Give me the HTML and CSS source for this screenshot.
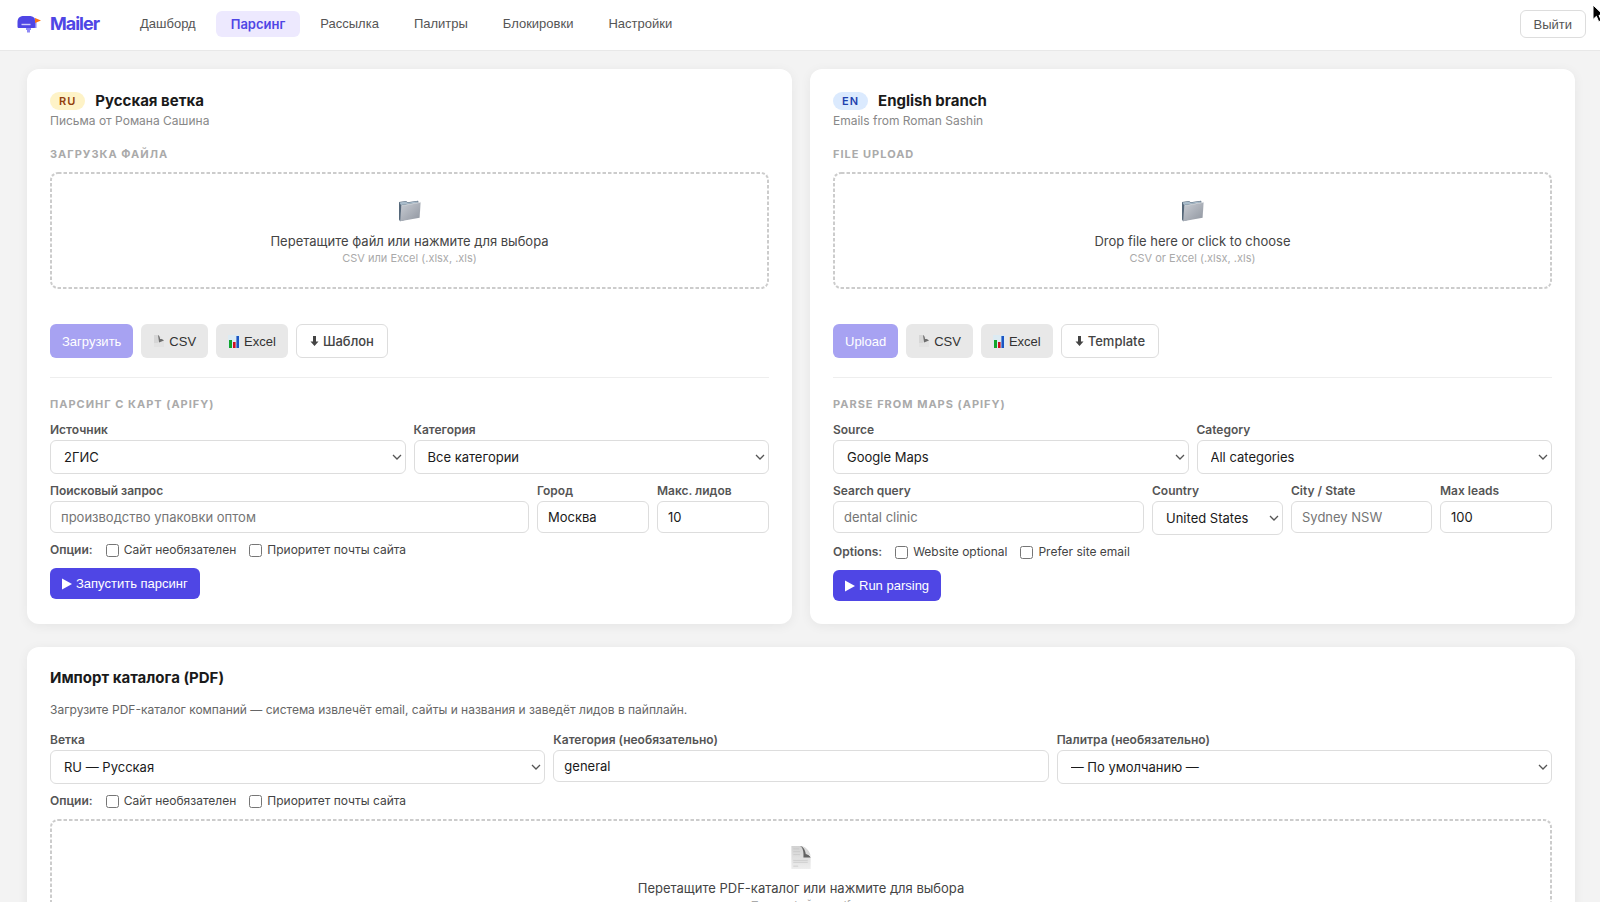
FILE: index.html
```html
<!DOCTYPE html>
<html lang="ru">
<head>
	<meta charset="utf-8">
	<title>Mailer</title>
	<link rel="stylesheet" href="styles.css">
</head>
<body>
	<!-- shared icons -->
	<svg class="sprite" width="0" height="0">
		<defs>
			<linearGradient id="folderFront" x1="0" y1="0" x2="1" y2="1">
				<stop offset="0" stop-color="#c9cdd4"/>
				<stop offset="1" stop-color="#8f959f"/>
			</linearGradient>
			<linearGradient id="paper" x1="0" y1="0" x2="0" y2="1">
				<stop offset="0" stop-color="#d2d2d2"/>
				<stop offset="1" stop-color="#eeeeee"/>
			</linearGradient>
		</defs>
		<symbol id="icon-folder" viewBox="0 0 24 24">
			<path d="M1 3.5 8 2.6l1.6 1.2L20 2.2l.6 1.6L20 18 2 22.8 1 21z" fill="#56687a"/>
			<path d="M1.4 3.9 7.8 3l1.8 1.3 10-1.6v1.4L3 6.6z" fill="#a9bccb"/>
			<path d="M3.3 7.2 22.6 3.8 21.6 19.2 2.2 22.8z" fill="url(#folderFront)"/>
			<path d="M3.3 7.2 22.6 3.8" stroke="#e2e6ea" stroke-width=".7"/>
		</symbol>
		<symbol id="icon-page" viewBox="0 0 24 28">
			<path d="M2 2h11.5L22 14v12H2z" fill="url(#paper)"/>
			<path d="M11 2c3 1.500 4 6 3.500 12H22c-.5-1.500-2-2.800-3.500-3.200C17.500 7 15 3 11 2z" fill="#636363"/>
			<path d="M13 2c5 1.500 8.500 6 9 10.500-1.500-1.500-3-2-5-2C16.500 7 15 3.500 13 2z" fill="#d9d9d9"/>
			<path d="M4 5h6M4 8h7M4 11h7M4 17h15M4 19h15M4 23h5" stroke="#c4c4c4" stroke-width=".7"/>
		</symbol>
		<symbol id="icon-csv" viewBox="0 0 12 14">
			<path d="M1 1h5l5 6v6H1z" fill="#e2e2e2"/>
			<path d="M1 1h4v8H1z" fill="#d6d6d6"/>
			<path d="M5 1c1.500 1 2 2.500 2 4 1.500-.2 3.500.5 4 1.500L6 8.500z" fill="#6d6d6d"/>
		</symbol>
		<symbol id="icon-chart" viewBox="0 0 12 13">
			<path d="M0 0h12v13H0z" fill="#dcebf3"/>
			<path d="M1 5h3v8H1z" fill="#14a52c"/>
			<path d="M5 7h2.600v6H5z" fill="#cf1020"/>
			<path d="M8.400 1H11v12H8.400z" fill="#1b55c4"/>
		</symbol>
		<symbol id="icon-down" viewBox="0 0 9 12">
			<path d="M3 1h3v5.500h2.500l-4 4.500-4-4.500H3z" fill="currentColor"/>
		</symbol>
		<symbol id="icon-play" viewBox="0 0 10 12">
			<path d="M0 .5 10 6 0 11.500z" fill="currentColor"/>
		</symbol>
	</svg>

	<header class="topbar">
		<a class="logo" href="#">
			<svg width="24" height="18" viewBox="0 0 24 18">
				<path d="M12 1.500c5 0 7.500 2 7.500 5.500v6H12z" fill="#8a84f5"/>
				<path d="M9 12h5v3h-1v2.500h-3V15H9z" fill="#8f89f6"/>
				<path d="M.5 7C.5 2.500 3.500 1 7 1h5c4 0 6 2 6 6v4.500c0 1-.5 1.500-1.500 1.500H2C1 13 .5 12.500.5 11.500z" fill="#4f46e5"/>
				<path d="M4.500 9.500h9" stroke="#cfccfb" stroke-width="1.400"/>
				<path d="M18 3l6 2.600-6 2.400z" fill="#f97316"/>
			</svg>
			<span>Mailer</span>
		</a>
		<nav class="nav">
			<a class="nav-link" href="#">Дашборд</a>
			<a class="nav-link active" href="#">Парсинг</a>
			<a class="nav-link" href="#">Рассылка</a>
			<a class="nav-link" href="#">Палитры</a>
			<a class="nav-link" href="#">Блокировки</a>
			<a class="nav-link" href="#">Настройки</a>
		</nav>
		<button class="logout" type="button">Выйти</button>
	</header>

	<main class="page">
		<div class="branches">
			<section class="card">
				<div class="card-head">
					<span class="badge badge-ru">RU</span>
					<h2>Русская ветка</h2>
				</div>
				<p class="subtitle">Письма от Романа Сашина</p>

				<h3 class="section-title">Загрузка файла</h3>
				<div class="dropzone">
					<svg class="drop-icon" width="24" height="24"><use href="#icon-folder"/></svg>
					<p class="drop-text">Перетащите файл или нажмите для выбора</p>
					<p class="drop-hint">CSV или Excel (.xlsx, .xls)</p>
				</div>
				<div class="actions">
					<button class="btn btn-primary" type="button" disabled>Загрузить</button>
					<button class="btn btn-gray" type="button"><svg width="12" height="14"><use href="#icon-csv"/></svg>CSV</button>
					<button class="btn btn-gray" type="button"><svg width="12" height="13"><use href="#icon-chart"/></svg>Excel</button>
					<a class="btn btn-outline" href="#"><svg width="9" height="12"><use href="#icon-down"/></svg>Шаблон</a>
				</div>

				<hr class="divider">

				<h3 class="section-title">Парсинг с карт (Apify)</h3>
				<form class="form">
					<div class="row row-2">
						<div class="field">
							<label for="ru-source">Источник</label>
							<select id="ru-source"><option>2ГИС</option></select>
						</div>
						<div class="field">
							<label for="ru-category">Категория</label>
							<select id="ru-category"><option>Все категории</option></select>
						</div>
					</div>
					<div class="row row-ru">
						<div class="field">
							<label for="ru-query">Поисковый запрос</label>
							<input id="ru-query" type="text" placeholder="производство упаковки оптом">
						</div>
						<div class="field">
							<label for="ru-city">Город</label>
							<input id="ru-city" type="text" value="Москва">
						</div>
						<div class="field">
							<label for="ru-max">Макс. лидов</label>
							<input id="ru-max" type="number" value="10">
						</div>
					</div>
					<div class="options">
						<span class="options-title">Опции:</span>
						<label class="check"><input type="checkbox">Сайт необязателен</label>
						<label class="check"><input type="checkbox">Приоритет почты сайта</label>
					</div>
					<button class="btn btn-primary btn-run" type="button"><svg width="10" height="12"><use href="#icon-play"/></svg>Запустить парсинг</button>
				</form>
			</section>

			<section class="card" lang="en">
				<div class="card-head">
					<span class="badge badge-en">EN</span>
					<h2>English branch</h2>
				</div>
				<p class="subtitle">Emails from Roman Sashin</p>

				<h3 class="section-title">File upload</h3>
				<div class="dropzone">
					<svg class="drop-icon" width="24" height="24"><use href="#icon-folder"/></svg>
					<p class="drop-text">Drop file here or click to choose</p>
					<p class="drop-hint">CSV or Excel (.xlsx, .xls)</p>
				</div>
				<div class="actions">
					<button class="btn btn-primary" type="button" disabled>Upload</button>
					<button class="btn btn-gray" type="button"><svg width="12" height="14"><use href="#icon-csv"/></svg>CSV</button>
					<button class="btn btn-gray" type="button"><svg width="12" height="13"><use href="#icon-chart"/></svg>Excel</button>
					<a class="btn btn-outline" href="#"><svg width="9" height="12"><use href="#icon-down"/></svg>Template</a>
				</div>

				<hr class="divider">

				<h3 class="section-title">Parse from maps (Apify)</h3>
				<form class="form">
					<div class="row row-2">
						<div class="field">
							<label for="en-source">Source</label>
							<select id="en-source"><option>Google Maps</option></select>
						</div>
						<div class="field">
							<label for="en-category">Category</label>
							<select id="en-category"><option>All categories</option></select>
						</div>
					</div>
					<div class="row row-en">
						<div class="field">
							<label for="en-query">Search query</label>
							<input id="en-query" type="text" placeholder="dental clinic">
						</div>
						<div class="field">
							<label for="en-country">Country</label>
							<select id="en-country"><option>United States</option></select>
						</div>
						<div class="field">
							<label for="en-city">City / State</label>
							<input id="en-city" type="text" placeholder="Sydney NSW">
						</div>
						<div class="field">
							<label for="en-max">Max leads</label>
							<input id="en-max" type="number" value="100">
						</div>
					</div>
					<div class="options">
						<span class="options-title">Options:</span>
						<label class="check"><input type="checkbox">Website optional</label>
						<label class="check"><input type="checkbox">Prefer site email</label>
					</div>
					<button class="btn btn-primary btn-run" type="button"><svg width="10" height="12"><use href="#icon-play"/></svg>Run parsing</button>
				</form>
			</section>
		</div>

		<section class="card">
			<h2 class="import-title">Импорт каталога (PDF)</h2>
			<p class="import-text">Загрузите PDF-каталог компаний — система извлечёт email, сайты и названия и заведёт лидов в пайплайн.</p>
			<form class="form">
				<div class="row row-3">
					<div class="field">
						<label for="pdf-branch">Ветка</label>
						<select id="pdf-branch"><option>RU — Русская</option></select>
					</div>
					<div class="field">
						<label for="pdf-category">Категория (необязательно)</label>
						<input id="pdf-category" type="text" value="general">
					</div>
					<div class="field">
						<label for="pdf-palette">Палитра (необязательно)</label>
						<select id="pdf-palette"><option>— По умолчанию —</option></select>
					</div>
				</div>
				<div class="options">
					<span class="options-title">Опции:</span>
					<label class="check"><input type="checkbox">Сайт необязателен</label>
					<label class="check"><input type="checkbox">Приоритет почты сайта</label>
				</div>
				<div class="dropzone">
					<svg class="drop-icon" width="24" height="28"><use href="#icon-page"/></svg>
					<p class="drop-text">Перетащите PDF-каталог или нажмите для выбора</p>
					<p class="drop-hint">Только файлы .pdf</p>
				</div>
			</form>
		</section>
	</main>

	<svg class="cursor" width="14" height="20" viewBox="0 0 14 20">
		<path d="M1 1v14.500l3.400-3.200 2.300 5.400 2.600-1.100L7 11.300h4.800z" fill="#000" stroke="#fff" stroke-width="1"/>
	</svg>
</body>
</html>
```
FILE: styles.css
```css
* {
	box-sizing: border-box;
	margin: 0;
	padding: 0;
}

body {
	background: #f3f3f3;
	color: #1a1a1a;
	font-family: Inter, "Open Sans", sans-serif;
	font-size: 13px;
	line-height: 16px;
	overflow-x: hidden;
}

a {
	color: inherit;
	text-decoration: none;
}

.sprite {
	display: block;
}

/* top bar */
.topbar {
	display: flex;
	align-items: center;
	height: 51px;
	padding: 0 14px 2px 17px;
	background: #fff;
	border-bottom: 1px solid #e8e8e8;
}

.logo {
	display: flex;
	align-items: center;
	gap: 9px;
	margin-right: 26px;
	color: #4f46e5;
	font-size: 18px;
	font-weight: 700;
	letter-spacing: -1px;
}

.nav {
	display: flex;
	align-items: center;
	gap: 5px;
}

.nav-link {
	padding: 5px 15px;
	border-radius: 6px;
	color: #555;
	font-family: "Liberation Sans", Arial, sans-serif;
	font-size: 13px;
}

.nav-link.active {
	background: #ede9fe;
	color: #4f46e5;
	font-family: Inter, sans-serif;
	font-weight: 600;
}

.logout {
	height: 28px;
	margin-left: auto;
	padding: 0 13px;
	background: #fff;
	border: 1px solid #ddd;
	border-radius: 6px;
	color: #555;
	font-family: "Liberation Sans", Arial, sans-serif;
	font-size: 13px;
}

/* layout */
.page {
	display: flex;
	flex-direction: column;
	gap: 23px;
	padding: 18px 25px 24px 27px;
}

.branches {
	display: grid;
	grid-template-columns: 1fr 1fr;
	gap: 18px;
}

.card {
	padding: 23px;
	background: #fff;
	border-radius: 12px;
	box-shadow: 0 2px 12px rgba(0, 0, 0, 0.06);
}

.card-head {
	display: flex;
	align-items: center;
	gap: 10px;
	height: 18px;
}

h2 {
	font-size: 15px;
	font-weight: 700;
}

.badge {
	padding: 1px 9px;
	border-radius: 10px;
	font-size: 11px;
	font-weight: 600;
	letter-spacing: 1px;
}

.badge-ru {
	background: #fef3c7;
	color: #92400e;
}

.badge-en {
	background: #dbeafe;
	color: #1e40af;
}

.subtitle {
	margin: 3px 0 17px;
	color: #888;
	font-size: 12px;
}

.section-title {
	margin-bottom: 10px;
	color: #aaa;
	font-size: 11px;
	font-weight: 700;
	letter-spacing: 1px;
	text-transform: uppercase;
}

/* file drop, short dashes drawn as a background */
.dropzone {
	display: flex;
	flex-direction: column;
	align-items: center;
	height: 117px;
	padding-top: 25px;
	border-radius: 8px;
	background: url("data:image/svg+xml,%3Csvg xmlns='http://www.w3.org/2000/svg' width='100%25' height='100%25'%3E%3Crect width='100%25' height='100%25' rx='8' fill='none' stroke='%23ccc' stroke-width='4' stroke-dasharray='3.5 2'/%3E%3C/svg%3E") no-repeat;
	text-align: center;
}

.drop-icon {
	height: 27px;
}

.drop-text {
	margin-top: 9px;
	color: #444;
}

.drop-hint {
	margin-top: 1px;
	color: #aaa;
	font-size: 11px;
}

/* buttons */
.actions {
	display: flex;
	gap: 8px;
	margin-top: 35px;
}

.btn {
	display: inline-flex;
	align-items: center;
	justify-content: center;
	gap: 4px;
	height: 34px;
	padding: 0 11px;
	border: 1px solid transparent;
	border-radius: 6px;
	font-family: "Liberation Sans", Arial, sans-serif;
	font-size: 13px;
}

.btn-primary {
	background: #4f46e5;
	color: #fff;
}

.btn-primary:disabled {
	background: #a7a2f2;
}

.btn-gray {
	background: #e8e8e8;
	color: #333;
}

.btn-outline {
	padding: 0 13px;
	border-color: #ddd;
	color: #444;
	font-family: Inter, sans-serif;
	font-weight: 500;
}

.btn-run {
	align-self: flex-start;
	height: 31px;
	margin-top: 1px;
}

.divider {
	margin: 19px 0 18px;
	border: 0;
	border-top: 1px solid #eee;
}

/* forms */
.form {
	display: flex;
	flex-direction: column;
	gap: 9px;
}

.form .dropzone {
	margin-top: 1px;
}

.row {
	display: grid;
	align-items: start;
	gap: 8px;
}

.row-2 {
	grid-template-columns: 1fr 1fr;
}

.row-3 {
	grid-template-columns: 1fr 1fr 1fr;
}

.row-ru {
	grid-template-columns: 1fr 112px 112px;
}

.row-en {
	grid-template-columns: 1fr 131px 141px 112px;
}

.field {
	display: flex;
	flex-direction: column;
	gap: 2px;
}

.field label,
.options-title {
	color: #555;
	font-size: 12px;
	font-weight: 600;
}

.field input,
.field select {
	width: 100%;
	height: 32px;
	padding: 0 10px;
	background: #fff;
	border: 1px solid #ddd;
	border-radius: 6px;
	color: #1a1a1a;
	font-family: inherit;
	font-size: 13px;
}

.field select {
	height: 34px;
	padding: 0 13px;
	appearance: none;
	background: #fff url("data:image/svg+xml,%3Csvg xmlns='http://www.w3.org/2000/svg' width='10' height='7'%3E%3Cpath d='M1 1l4 4 4-4' fill='none' stroke='%23555' stroke-width='1.3'/%3E%3C/svg%3E") no-repeat right 3px center;
}

.field input::placeholder {
	color: #757575;
}

.options {
	display: flex;
	align-items: center;
	gap: 13px;
}

.check {
	display: flex;
	align-items: center;
	gap: 5px;
	color: #444;
	font-size: 12px;
}

.check input {
	width: 13px;
	height: 13px;
}

.import-title {
	margin-bottom: 16px;
}

.import-text {
	margin-bottom: 14px;
	color: #666;
	font-size: 12px;
}

.cursor {
	position: fixed;
	top: 4px;
	right: -6px;
}
```
